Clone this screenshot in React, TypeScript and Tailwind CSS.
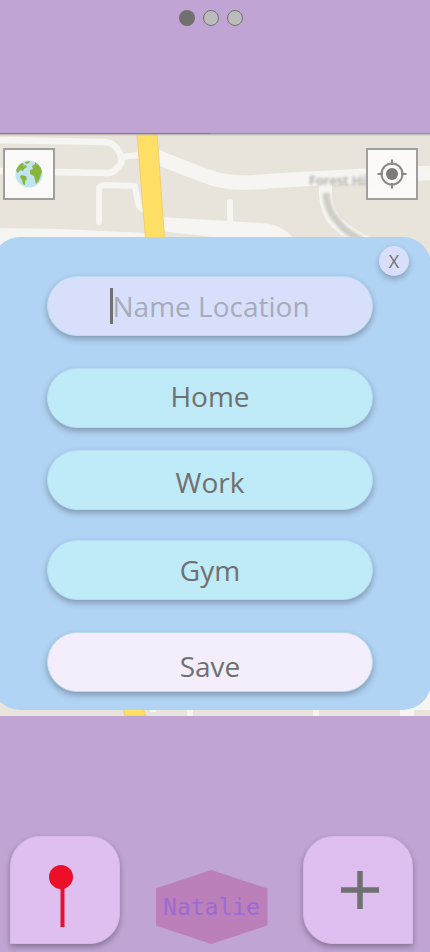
import React from "react";

const pill =
  "flex h-[60px] w-full items-center justify-center rounded-full border border-[#b9dcf5] text-[28px] leading-10 text-[#707070] shadow-[0_3px_6px_rgba(0,0,0,0.28)]";

function StreetMap() {
  return (
    <svg
      className="absolute inset-0 h-full w-full"
      viewBox="0 133 430 583"
      preserveAspectRatio="xMidYMin slice"
      aria-hidden="true"
    >
      <defs>
        <filter id="soft" x="-20%" y="-50%" width="140%" height="200%">
          <feGaussianBlur stdDeviation="1.6" />
        </filter>
      </defs>
      <rect y="133" width="430" height="583" fill="#e8e4dc" />
      <g fill="none" stroke="#f7f5f1" strokeLinejoin="round">
        <path d="M0 140L105 142Q115 143 119 152Q125 162 117 168Q113 174 105 173L0 171" strokeWidth="6.5" />
        <path d="M120 158L128 156L142 155" strokeWidth="6" />
        <path d="M99 222V190Q99 185 105 185L135 186L138 203Q139 208 143 209" strokeWidth="6" strokeLinecap="round" />
        <path d="M155 156Q194 172 215 179Q236 185 270 181L360 176L430 173" strokeWidth="14.5" />
        <path d="M230 202V238" strokeWidth="6" strokeLinecap="round" />
        <path d="M326 182Q323 208 336 222Q350 236 372 245" strokeWidth="13" />
      </g>
      <path d="M0 228L60 229L145 233V248H0Z" fill="#f7f5f1" />
      <path d="M160 217L260 223Q282 224 293 238L230 239L160 231Z" fill="#f7f5f1" />
      <path d="M326 193Q327 211 338 222Q346 233 362 240" fill="none" stroke="#cfccc6" strokeWidth="7" filter="url(#soft)" />
      <g filter="url(#soft)" fill="#a5a29e" className="font-['Open_Sans',sans-serif] text-[13px] font-semibold">
        <text x="309" y="185">Forest Hills Dr</text>
      </g>
      <path d="M38 235H98M102 235H135" stroke="#b9b6b0" strokeWidth="5" filter="url(#soft)" />
      <path d="M137 133L146 245H165L157 133Z" fill="#ffdf66" />
      <path d="M137 133L146 245M157 133L165 245" fill="none" stroke="#efcf6d" />
      <path d="M123 708H143L146 716H125Z" fill="#ffdf66" stroke="#efcf6d" />
      <path d="M190 708V716M316 708V716" stroke="#f7f5f1" strokeWidth="6" />
      <path d="M150 709H156V712H150ZM400 690H430V710H414V716H400Z" fill="#f7f5f1" />
      <path d="M0 133.5H211" stroke="#817d7d" strokeWidth="2" />
      <path d="M211 133.5H430" stroke="#83999e" strokeWidth="2" />
      <path d="M0 135H430" stroke="#c9c6bf" />
    </svg>
  );
}

function GlobeIcon() {
  return (
    <svg width="28" height="28" viewBox="0 0 28 28" aria-hidden="true">
      <circle cx="14" cy="14" r="13.5" fill="#bfe3f0" />
      <g fill="#8ab53d">
        <path d="M1 11Q3 5 7 3L9 4L8 6L11 5L12 7L9 9L8 11L5 10L3 13Z" />
        <path d="M10 2L15 1L14 3L11 4Z" />
        <path d="M6 15L11 16L12 19L10 21L10 25L8 24L7 20L5 17Z" />
        <path d="M17 6L20 4L20 2Q26 6 27 12L26 14L25 18L23 22L21 24L20 20L19 16L15 14L15 10L18 9Z" />
      </g>
    </svg>
  );
}

function TargetIcon() {
  return (
    <svg width="30" height="30" viewBox="0 0 30 30" fill="none" stroke="#8a8a8a" strokeWidth="2" aria-hidden="true">
      <circle cx="15" cy="15" r="10.5" />
      <circle cx="15" cy="15" r="6" fill="#7c7c7c" stroke="none" />
      <path d="M15 0.5V6M15 24V29.5M0.5 15H6M24 15H29.5" />
    </svg>
  );
}

export default function App() {
  const mapButton =
    "flex size-[52px] items-center justify-center border-2 border-[#a09f9d] bg-[#fcfbfa]/95";
  const tile =
    "flex h-[108px] w-[110px] items-center justify-center rounded-[30px] border border-[#d6b8e4] bg-[#dfbfef] shadow-[0_3px_6px_rgba(0,0,0,0.3)]";
  return (
    <div className="flex min-h-screen flex-col overflow-x-hidden bg-[#c0a5d4] font-['Open_Sans','Noto_Sans',sans-serif]">
      <header className="flex h-[133px] justify-center gap-2 pt-[10px] pr-2">
        <span className="size-4 rounded-full bg-[#707070]" />
        <span className="size-4 rounded-full border border-[#707070] bg-[#bcbcbc]" />
        <span className="size-4 rounded-full border border-[#707070] bg-[#bcbcbc]" />
      </header>

      <main className="relative pt-[15px] pb-[6px]">
        <StreetMap />
        <div className="relative flex justify-between pr-3 pl-[3px]">
          <button type="button" aria-label="Map view" className={mapButton}>
            <GlobeIcon />
          </button>
          <button type="button" aria-label="My location" className={mapButton}>
            <TargetIcon />
          </button>
        </div>

        <form
          className="relative mt-[37px] -mr-px -ml-2 rounded-[28px] bg-[#b1d3f4] pt-[39px] pr-[58px] pb-[18px] pl-[55px]"
          onSubmit={(e) => e.preventDefault()}
        >
          <button
            type="button"
            aria-label="Close"
            className="absolute top-[9px] right-[22px] flex size-[30px] items-center justify-center rounded-full bg-[#d8dffb] text-[18px] leading-6 text-[#707070] shadow-[0_3px_6px_rgba(0,0,0,0.25)]"
          >
            X
          </button>
          <label className={`${pill} bg-[#d8dffb]`}>
            <span className="h-9 w-[3px] bg-[#707070]" />
            <input
              type="text"
              aria-label="Name Location"
              placeholder="Name Location"
              className="w-[198px] bg-transparent outline-none placeholder:text-[#a7abbb]"
            />
          </label>
          <button type="button" className={`${pill} mt-8 bg-[#bfeaf8] pb-1`}>
            Home
          </button>
          <button type="button" className={`${pill} mt-[22px] bg-[#bfeaf8] pt-1`}>
            Work
          </button>
          <button type="button" className={`${pill} mt-[30px] bg-[#bfeaf8]`}>
            Gym
          </button>
          <button type="submit" className={`${pill} mt-8 bg-[#f4eefc] pt-2`}>
            Save
          </button>
        </form>
      </main>

      <footer className="flex items-end justify-between pt-[120px] pr-[17px] pb-2 pl-[10px]">
        <button type="button" aria-label="Drop pin" className={`${tile} rounded-bl-none`}>
          <svg width="24" height="62" viewBox="0 0 24 62" className="mt-3 mr-2" aria-hidden="true">
            <circle cx="12" cy="12" r="12" fill="#ed0e2a" />
            <path d="M13.5 20V62" stroke="#ed0e2a" strokeWidth="4" />
          </svg>
        </button>
        <div className="grid h-[74px] w-[112px] place-items-center bg-[#bb7fba] [clip-path:polygon(50%_0,100%_25%,100%_75%,50%_100%,0_75%,0_25%)]">
          <span className="font-['DejaVu_Sans_Mono',monospace] text-[23px] leading-8 text-[#9c6ad3]">Natalie</span>
        </div>
        <button type="button" aria-label="Add location" className={`${tile} rounded-br-none`}>
          <svg width="38" height="38" viewBox="0 0 38 38" className="ml-1" aria-hidden="true">
            <path d="M19 0V38M0 19H38" stroke="#707070" strokeWidth="5.5" />
          </svg>
        </button>
      </footer>
    </div>
  );
}
